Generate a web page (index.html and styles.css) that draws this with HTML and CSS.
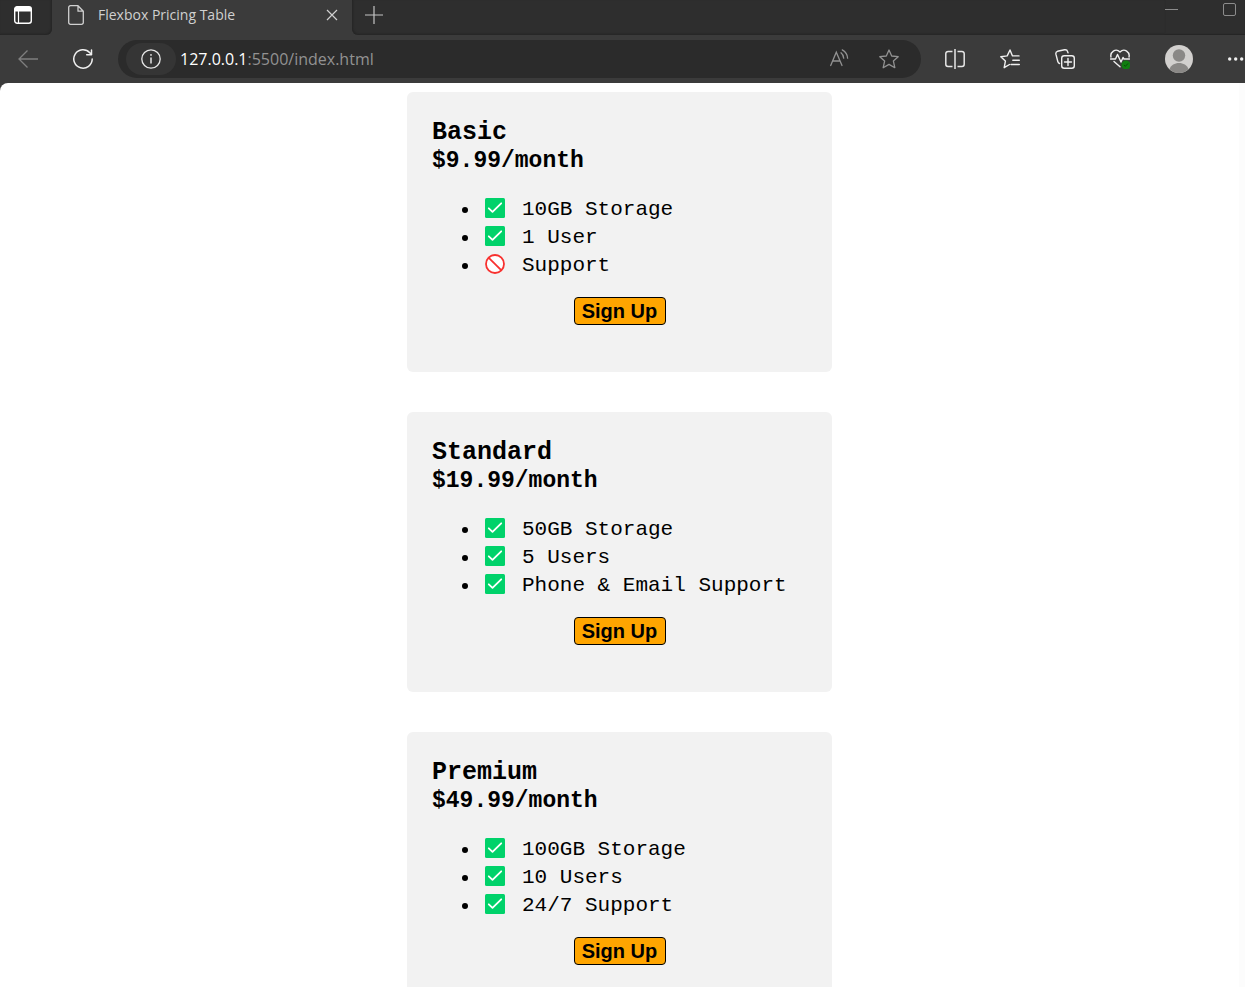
FILE: index.html
```html
<!DOCTYPE html>
<html lang="en">
<head>
<meta charset="utf-8">
<title>Flexbox Pricing Table</title>
<link rel="stylesheet" href="styles.css">
</head>
<body>
<svg class="sprite" aria-hidden="true">
  <symbol id="check" viewBox="0 0 20 20">
    <rect width="20" height="20" rx="1.5" fill="#00d26a"/>
    <path d="M3.8 10.3l3.7 3.6 8.700-8.600" fill="none" stroke="#fff" stroke-width="1.8" stroke-linecap="round" stroke-linejoin="round"/>
  </symbol>
  <symbol id="no" viewBox="0 0 20 20">
    <circle cx="10" cy="10" r="9" fill="#fff" stroke="#f8312f" stroke-width="1.8"/>
    <path d="M3.8 3.8l12.4 12.4" stroke="#f8312f" stroke-width="1.8"/>
  </symbol>
</svg>

<header class="browser">
  <div class="tabstrip">
    <button class="icon-button tab-menu" aria-label="Tab actions">
      <svg width="20" height="20" viewBox="0 0 20 20"><rect x="1.7" y="1.7" width="16.6" height="16.6" rx="2.5" fill="none" stroke="#fff" stroke-width="1.4"/><path d="M1.5 6.5V4a2.5 2.5 0 0 1 2.5-2.5h12A2.5 2.5 0 0 1 18.500 4v2.500z" fill="#fff"/><path d="M5.500 6v12" stroke="#fff" stroke-width="1.2"/></svg>
    </button>
    <div class="tab">
      <svg width="16" height="20" viewBox="0 0 16 20" fill="none" stroke="#d0d0d0" stroke-width="1.3" stroke-linejoin="round"><path d="M2.500.700h7.500l5.300 5.500v11.300a1.800 1.800 0 0 1-1.800 1.800h-11A1.800 1.800 0 0 1 .700 17.500v-15A1.800 1.800 0 0 1 2.500.700zM10 .700v5.500h5.300"/></svg>
      <span class="tab-title">Flexbox Pricing Table</span>
      <button class="icon-button" aria-label="Close tab">
        <svg width="12" height="12" viewBox="0 0 12 12" stroke="#d0d0d0" stroke-width="1.200"><path d="M1 1l10 10M11 1L1 11"/></svg>
      </button>
    </div>
    <button class="icon-button new-tab" aria-label="New tab">
      <svg width="18" height="18" viewBox="0 0 18 18" stroke="#c4c4c4" stroke-width="1.200"><path d="M9 0v18M0 9h18"/></svg>
    </button>
    <div class="window-controls">
      <button class="icon-button" aria-label="Minimize"><svg width="14" height="14" viewBox="0 0 14 14" stroke="#8c8c8c"><path d="M0 6.500h13"/></svg></button>
      <button class="icon-button" aria-label="Maximize"><svg width="14" height="14" viewBox="0 0 14 14" fill="none" stroke="#8c8c8c"><rect x=".5" y=".5" width="12" height="12" rx="1.500"/></svg></button>
    </div>
  </div>

  <nav class="toolbar" aria-label="Browser toolbar">
    <div class="nav-buttons">
      <button class="icon-button" aria-label="Back"><svg width="20" height="20" viewBox="0 0 20 20" fill="none" stroke="#7f7f7f" stroke-width="1.300"><path d="M20 10H1M9.500 1.500L1 10l8.500 8.500"/></svg></button>
      <button class="icon-button" aria-label="Reload"><svg width="20" height="20" viewBox="0 0 20 20" fill="none" stroke="#f0f0f0" stroke-width="1.500" stroke-linecap="round" stroke-linejoin="round"><path d="M19.200 10A9.200 9.200 0 1 1 16.800 3.800L18.500 5.700M18.500.900v4.800h-4.800"/></svg></button>
    </div>
    <div class="omnibox">
      <button class="icon-button site-info" aria-label="View site information"><svg width="20" height="20" viewBox="0 0 20 20" fill="none" stroke="#e6e6e6" stroke-width="1.300"><circle cx="10" cy="10" r="9.200"/><path d="M10 8.500v6" stroke-width="1.500"/><circle cx="10" cy="5.900" r=".9" fill="#e6e6e6" stroke="none"/></svg></button>
      <div class="url" role="textbox" aria-label="Address" contenteditable="true" spellcheck="false"><span class="host">127.0.0.1</span>:5500/index.html</div>
      <button class="icon-button" aria-label="Read aloud"><svg width="20" height="20" viewBox="0 0 20 20" fill="none" stroke="#929292" stroke-width="1.300" stroke-linecap="round"><path d="M1.700 16.500L7.300 3.200l5.700 13.300M3.600 12h7.500M12 3.800q2.500 2 2.700 5.400M13.300.900q5.200 3.200 5.300 8.300"/></svg></button>
      <button class="icon-button" aria-label="Add to favorites"><svg width="20" height="20" viewBox="0 0 20 20" fill="none" stroke="#929292" stroke-width="1.300" stroke-linejoin="round"><path d="M10 1l2.700 6 6.500.700-4.800 4.400 1.400 6.600L10 15.400l-5.800 3.300 1.400-6.600L.800 7.700 7.300 7z"/></svg></button>
    </div>
    <div class="tools">
      <button class="icon-button" aria-label="Split screen"><svg width="20" height="20" viewBox="0 0 20 20" fill="none" stroke="#e6e6e6" stroke-width="1.500"><path d="M7.500 2.500H3A2.200 2.200 0 0 0 .800 4.700v10.600A2.200 2.200 0 0 0 3 17.500h4.500M12.500 2.500H17a2.200 2.200 0 0 1 2.200 2.200v10.600a2.200 2.200 0 0 1-2.200 2.200h-4.500M10 0v20"/></svg></button>
      <button class="icon-button" aria-label="Favorites"><svg width="20" height="20" viewBox="0 0 20 20" fill="none" stroke="#f0f0f0" stroke-width="1.400" stroke-linejoin="round" stroke-linecap="round"><path d="M9.500 15.500l-5.300 3.200 1.200-6.600L.800 7.700l6.400-.8L10 1l2.500 5.900H19M12.800 11.200H19.300M11 15.500h8.300"/></svg></button>
      <button class="icon-button" aria-label="Collections"><svg width="20" height="20" viewBox="0 0 20 20" fill="none" stroke="#f0f0f0" stroke-width="1.400" stroke-linecap="round"><rect x="6.700" y="6.700" width="12.600" height="12.600" rx="2.500"/><path d="M13 9.500v7M9.500 13h7M4.500 14.500q-1.300-.5-1.700-2L.9 5.200Q.500 3 2.500 2.300L9.500.800Q12 .400 12.600 2.600l.4 1.200"/></svg></button>
      <button class="icon-button" aria-label="Browser essentials"><svg width="20" height="20" viewBox="0 0 20 20" fill="none" stroke="#f0f0f0" stroke-width="1.400" stroke-linejoin="round" stroke-linecap="round"><path d="M1 8C-.2 3.500 5.500-1.500 10 3c4.500-4.500 10.200.5 9 5M.500 10h5l2-4.500L11 13l2-4.500 1 1.500h5.500M4 12.500l6 5.300"/><circle cx="16" cy="16" r="4.500" fill="#107c10" stroke="none"/><path d="M14.200 16.300l1.200 1 2.400-2.600" stroke="#064d06" stroke-width="1"/></svg></button>
      <button class="icon-button" aria-label="Profile"><svg width="28" height="28" viewBox="0 0 28 28"><circle cx="14" cy="14" r="14" fill="#d2d0ce"/><circle cx="14" cy="10.500" r="6.200" fill="#8a8886"/><path d="M4.500 24.300C7 16 21 16 23.500 24.300A14 14 0 0 1 4.500 24.300z" fill="#8a8886"/></svg></button>
      <button class="icon-button" aria-label="Settings and more"><svg width="17" height="20" viewBox="0 0 17 20" fill="#f0f0f0"><circle cx="1.700" cy="10" r="1.700"/><circle cx="7.700" cy="10" r="1.700"/><circle cx="13.700" cy="10" r="1.700"/></svg></button>
    </div>
  </nav>
</header>

<main class="page">
  <section class="card">
    <h2 class="plan">Basic</h2>
    <h3 class="price">$9.99/month</h3>
    <ul class="features">
      <li><svg class="mark" role="img" aria-label="Included"><use href="#check"/></svg>10GB Storage</li>
      <li><svg class="mark" role="img" aria-label="Included"><use href="#check"/></svg>1 User</li>
      <li><svg class="mark" role="img" aria-label="Not included"><use href="#no"/></svg>Support</li>
    </ul>
    <button class="signup">Sign Up</button>
  </section>
  <section class="card">
    <h2 class="plan">Standard</h2>
    <h3 class="price">$19.99/month</h3>
    <ul class="features">
      <li><svg class="mark" role="img" aria-label="Included"><use href="#check"/></svg>50GB Storage</li>
      <li><svg class="mark" role="img" aria-label="Included"><use href="#check"/></svg>5 Users</li>
      <li><svg class="mark" role="img" aria-label="Included"><use href="#check"/></svg>Phone &amp; Email Support</li>
    </ul>
    <button class="signup">Sign Up</button>
  </section>
  <section class="card">
    <h2 class="plan">Premium</h2>
    <h3 class="price">$49.99/month</h3>
    <ul class="features">
      <li><svg class="mark" role="img" aria-label="Included"><use href="#check"/></svg>100GB Storage</li>
      <li><svg class="mark" role="img" aria-label="Included"><use href="#check"/></svg>10 Users</li>
      <li><svg class="mark" role="img" aria-label="Included"><use href="#check"/></svg>24/7 Support</li>
    </ul>
    <button class="signup">Sign Up</button>
  </section>
</main>
</body>
</html>
```
FILE: styles.css
```css
* {
  box-sizing: border-box;
}

body {
  margin: 0;
  height: 100vh;
  display: flex;
  flex-direction: column;
  overflow: hidden;
  background: #3b3b3b;
}

.sprite {
  display: none;
}

.browser {
  flex: none;
  font-family: "Open Sans", "Noto Sans", sans-serif;
}

.icon-button {
  display: flex;
  flex: none;
  padding: 0;
  border: 0;
  background: none;
}

.tabstrip {
  display: flex;
  height: 35px;
  background: #3b3b3b;
}

.tab-menu {
  width: 52px;
  padding: 5px 0 0 13px;
  background: #2e2e2e;
  border-bottom-right-radius: 6px;
  box-shadow: inset -1px -1px 2px #252525;
}

.tab {
  display: flex;
  align-items: center;
  width: 300px;
  padding: 0 14px 5px 16px;
  background: #3b3b3b;
}

.tab-title {
  flex: 1;
  margin-left: 14px;
  font-size: 14px;
  line-height: 20px;
  color: #d0d0d0;
}

.new-tab {
  flex: 1;
  padding: 6px 0 0 13px;
  background: #2e2e2e;
  border-bottom-left-radius: 6px;
  box-shadow: inset 1px -1px 2px #252525;
}

.window-controls {
  display: flex;
  gap: 44px;
  padding: 3px 8px 0 0;
  background: #2e2e2e;
  box-shadow: inset 0 -1px 1px #252525;
}

.toolbar {
  display: flex;
  align-items: center;
  height: 48px;
}

.nav-buttons {
  display: flex;
  gap: 35px;
  padding: 0 25px 0 18px;
}

.omnibox {
  display: flex;
  flex: 1;
  align-items: center;
  gap: 30px;
  height: 38px;
  padding: 0 22px 0 8px;
  border-radius: 19px;
  background: #2b2b2b;
}

.site-info {
  justify-content: center;
  width: 50px;
  padding: 6px 0;
  border-radius: 16px;
  background: #353535;
}

.url {
  flex: 1;
  margin-left: -26px;
  font-size: 16px;
  line-height: 24px;
  white-space: nowrap;
  color: #929292;
}

.host {
  color: #fff;
}

.tools {
  display: flex;
  align-items: center;
  gap: 35px;
  margin-left: 24px;
}

.page {
  display: flex;
  flex: 1;
  flex-direction: column;
  align-items: center;
  gap: 40px;
  min-height: 0;
  padding: 9px 0 0;
  overflow: hidden;
  border-right: 6px solid #fcfcfc;
  border-top-left-radius: 8px;
  background: #fff;
  color: #000;
  font-family: "Liberation Mono", monospace;
}

.card {
  display: flex;
  flex: none;
  flex-direction: column;
  width: 425px;
  max-width: 100%;
  padding: 27px 25px 47px;
  border-radius: 6px;
  background: #f2f2f2;
}

.plan,
.price {
  margin: 0;
  line-height: 28px;
  font-weight: bold;
}

.plan {
  font-size: 25px;
}

.price {
  font-size: 23px;
}

.features {
  margin: 21px 0 17px;
  padding-left: 48px;
  font-size: 21px;
  line-height: 28px;
  white-space: nowrap;
}

.mark {
  width: 20px;
  height: 20px;
  margin: 0 17px 0 5px;
  vertical-align: -3px;
}

.signup {
  align-self: center;
  width: 92px;
  height: 28px;
  padding: 0;
  border: 1px solid #000;
  border-radius: 4px;
  background: #ffa500;
  color: #000;
  font: bold 20px/24px "Liberation Sans", Arial, sans-serif;
}
```
